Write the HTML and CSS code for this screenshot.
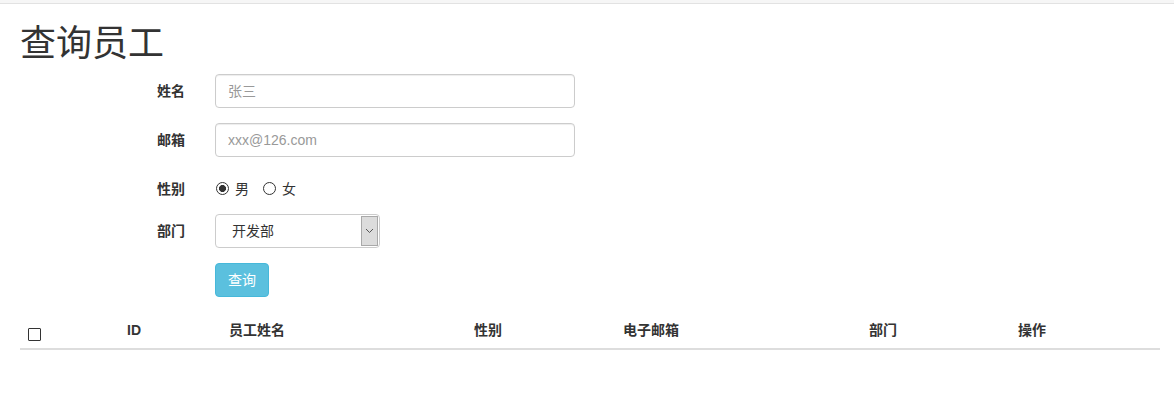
FILE: index.html
```html
<!DOCTYPE html>
<html lang="zh">
<head>
<meta charset="utf-8">
<title>查询员工</title>
<link rel="stylesheet" href="styles.css">
</head>
<body>
<div class="topbar"></div>
<div class="container">
  <h1 class="title">查询员工</h1>
  <form class="form">
    <div class="form-group">
      <label class="control-label">姓名</label>
      <input class="form-control" type="text" placeholder="张三">
    </div>
    <div class="form-group">
      <label class="control-label">邮箱</label>
      <input class="form-control" type="text" placeholder="xxx@126.com">
    </div>
    <div class="form-group form-group-radio">
      <label class="control-label">性别</label>
      <div class="radios">
        <label class="radio-inline"><input class="radio" type="radio" name="gender" checked>男</label>
        <label class="radio-inline"><input class="radio" type="radio" name="gender">女</label>
      </div>
    </div>
    <div class="form-group">
      <label class="control-label">部门</label>
      <div class="select">
        <span class="select-text">开发部</span>
        <span class="select-arrow"><svg width="9" height="6" viewBox="0 0 9 6"><path d="M1 1 L4.5 4.5 L8 1" fill="none" stroke="#555" stroke-width="1"/></svg></span>
      </div>
    </div>
    <div class="form-group">
      <span class="control-label"></span>
      <button class="btn" type="button">查询</button>
    </div>
  </form>
  <table class="table">
    <thead>
      <tr>
        <th class="c-check"><input class="checkbox" type="checkbox"></th>
        <th class="c-id">ID</th>
        <th class="c-name">员工姓名</th>
        <th class="c-gender">性别</th>
        <th class="c-email">电子邮箱</th>
        <th class="c-dept">部门</th>
        <th class="c-op">操作</th>
      </tr>
    </thead>
  </table>
</div>
</body>
</html>
```

FILE: styles.css
```css
* { box-sizing: border-box; }
html, body { margin: 0; padding: 0; background: #fff; }
body {
  font-family: "Liberation Sans", Arial, "Noto Sans CJK SC", sans-serif;
  font-size: 14px;
  line-height: 20px;
  color: #333;
}
.topbar {
  height: 4px;
  background: #f6f6f6;
  border-bottom: 1px solid #e2e2e2;
}
.container {
  padding: 0 14px 0 20px;
}
.title {
  margin: 20px 0 10px;
  font-size: 36px;
  font-weight: 400;
  line-height: 39.6px;
  color: #333;
}
.form-group {
  display: flex;
  align-items: flex-start;
  margin-bottom: 15px;
}
.control-label {
  width: 180px;
  padding: 7px 15px 0 0;
  text-align: right;
  font-weight: bold;
  line-height: 20px;
  flex: none;
  margin-right: 15px;
}
.form-control {
  width: 360px;
  height: 34px;
  padding: 6px 12px;
  font: inherit;
  color: #555;
  border: 1px solid #ccc;
  border-radius: 4px;
  box-shadow: inset 0 1px 1px rgba(0,0,0,.075);
  outline: none;
}
.form-control::placeholder { color: #999; }
.form-group-radio { height: 27px; }
.radios {
  display: flex;
  gap: 13px;
  padding-top: 7px;
}
.radio-inline {
  display: flex;
  align-items: center;
  line-height: 20px;
}
.radio {
  appearance: none;
  -webkit-appearance: none;
  width: 13px;
  height: 13px;
  margin: 0 6px 0 1px;
  border: 1px solid #333;
  border-radius: 50%;
  background: #fff;
}
.radio:checked {
  background: radial-gradient(circle, #333 0 3.2px, #fff 3.8px);
}
.select {
  width: 165px;
  height: 34px;
  display: flex;
  border: 1px solid #ccc;
  border-radius: 4px;
  overflow: hidden;
  color: #333;
}
.select-text {
  flex: 1;
  padding: 6px 0 0 16px;
}
.select-arrow {
  width: 17px;
  margin: 1px 1px 1px 0;
  background: #dcdcdc;
  border: 1px solid #a9a9a9;
  display: flex;
  align-items: center;
  justify-content: center;
}
.btn {
  height: 34px;
  padding: 6px 12px;
  font: inherit;
  color: #fff;
  background: #5bc0de;
  border: 1px solid #46b8da;
  border-radius: 4px;
}
.table {
  width: 1140px;
  border-collapse: collapse;
  table-layout: fixed;
}
.table th {
  padding: 8px;
  text-align: left;
  font-weight: bold;
  line-height: 20px;
  border-bottom: 2px solid #ddd;
  vertical-align: bottom;
}
.c-check { width: 99px; }
.c-id { width: 102px; }
.c-name { width: 245px; }
.c-gender { width: 149px; }
.c-email { width: 246px; }
.c-dept { width: 149px; }
.c-op { width: 150px; }
.checkbox {
  appearance: none;
  -webkit-appearance: none;
  display: block;
  width: 13px;
  height: 13px;
  margin: 4px 0 -1px;
  border: 1px solid #333;
  border-radius: 1px;
  background: #fff;
}
```
